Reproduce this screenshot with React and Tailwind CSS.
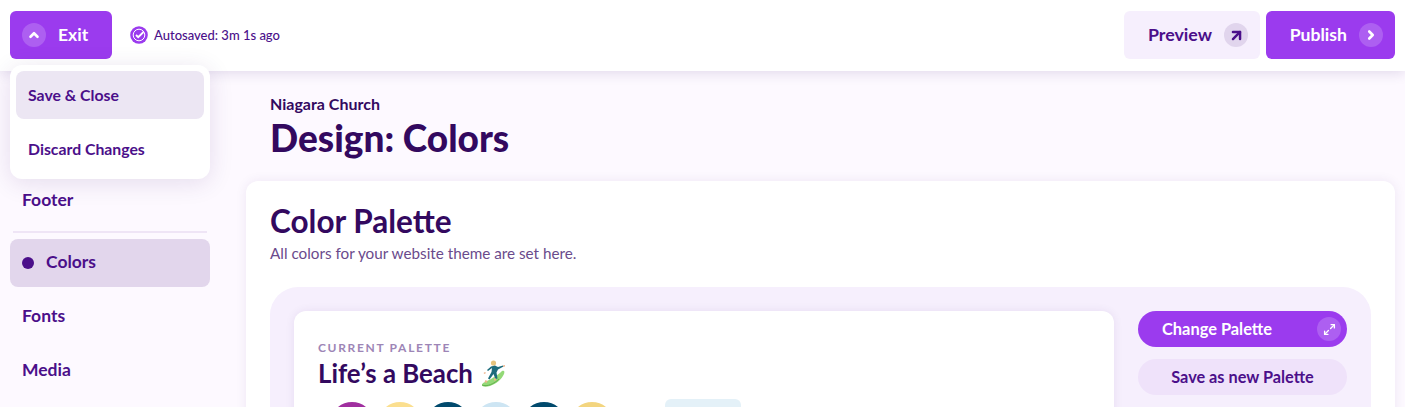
import React from "react";
import { ChevronUp, ChevronRight, ArrowUpRight, Maximize2 } from "lucide-react";

const swatches = ["#a02f9f", "#fbdf8f", "#014a6d", "#cde5f3", "#014a6d", "#f3d57f"];

function Surfer() {
  return (
    <svg width="25" height="27" viewBox="0 0 25 27" className="shrink-0">
      <path d="M1 25c0-2 3-3 7-5s10-6 13-9c2-1 3 0 2 3-2 5-8 10-14 12-4 1-8 1-8-1z" fill="#93d977" />
      <path d="M1 25c5 2 12-1 17-6" stroke="#62b04e" strokeWidth="1" fill="none" />
      <circle cx="12.5" cy="3" r="2.6" fill="#e6c47e" />
      <path d="M10 6.5l4-1 3 1.5 5-1.5 .5 1-5.5 3-1.5 3 1 6-2 .5-2-5-4 5.5-1.5-1 3.5-6.5 .5-4-4 3-1-1z" fill="#1d6c7c" />
      <path d="M4.5 20l2 1-1 2-2-1zM13 18.5l2 0 0 2-2 0zM22 5.5l2-.5 0 1.5-2 .5zM4 12l1 1-1.5 1-1-1z" fill="#eeb48c" />
    </svg>
  );
}

function NavItem({ children }) {
  return (
    <div className="h-12 flex items-center px-3 text-[17.5px] font-bold text-[#4b0f8a]">
      {children}
    </div>
  );
}

function IconDot({ children, className }) {
  return (
    <span className={`w-6 h-6 rounded-full flex items-center justify-center ${className}`}>
      {children}
    </span>
  );
}

export default function App() {
  return (
    <div className="relative h-[407px] overflow-hidden bg-[#fdf9ff] font-['Lato',sans-serif] text-[#33095f]">
      {/* Header */}
      <header className="relative z-10 h-[71px] bg-white flex items-center justify-between px-2.5 pb-px shadow-[0_2px_12px_rgba(60,20,110,0.14)]">
        <div className="flex items-center">
          <button className="w-[102px] h-12 rounded-md bg-[#9b3bee] text-white flex items-center pl-3 gap-[12px] text-[17.5px] font-bold">
            <IconDot className="bg-[#ad5ff1]">
              <ChevronUp size={14} strokeWidth={4.5} />
            </IconDot>
            Exit
          </button>
          <svg width="18" height="18" viewBox="0 0 18 18" className="ml-[18px] mr-[6px]">
            <circle cx="9" cy="9" r="8.8" fill="#9b3bee" />
            <circle cx="9" cy="9" r="5.8" fill="none" stroke="white" strokeWidth="1" />
            <path d="M6 9l2.2 2.2L13.5 6" fill="none" stroke="white" strokeWidth="1.8" />
          </svg>
          <span className="pt-px text-[13px] font-medium text-[#4b0f8a]">Autosaved: 3m 1s ago</span>
        </div>
        <div className="flex items-center gap-1.5">
          <button className="w-[136px] h-12 rounded-md bg-[#f6effd] text-[#4b0f8a] flex items-center justify-end pr-[12px] gap-[12px] text-[17.8px] font-bold">
            <span className="-mt-0.5">Preview</span>
            <IconDot className="bg-[#e1d5ed]">
              <ArrowUpRight size={17} strokeWidth={3.5} />
            </IconDot>
          </button>
          <button className="w-[129px] h-12 rounded-md bg-[#9b3bee] text-white flex items-center justify-end pr-[12px] gap-[12px] text-[17.6px] font-bold">
            Publish
            <IconDot className="bg-[#ad5ff1]">
              <ChevronRight size={14} strokeWidth={4.5} />
            </IconDot>
          </button>
        </div>
      </header>

      {/* Exit menu */}
      <div className="absolute z-20 left-2.5 top-[65px] w-[200px] h-[114px] bg-white rounded-xl p-1.5 shadow-[0_4px_24px_rgba(60,20,110,0.12)] text-[15.8px] font-bold text-[#4b0f8a]">
        <div className="h-12 rounded-lg bg-[#ece6f3] flex items-center px-3">Save &amp; Close</div>
        <div className="h-12 mt-1.5 flex items-center px-3">Discard Changes</div>
      </div>

      <div className="flex">
        {/* Sidebar */}
        <aside className="w-[246px] shrink-0 pl-2.5 pr-9 pt-[105px]">
          <NavItem>Footer</NavItem>
          <div className="h-0.5 mx-[3px] mt-[7px] mb-1.5 bg-[#efe5f6]" />
          <div className="h-12 rounded-lg bg-[#e2d6ec] flex items-center px-3 gap-[12px] text-[17.5px] font-bold text-[#4b0f8a]">
            <span className="w-3 h-3 rounded-full bg-[#4b0f8a]" />
            <span className="-mt-0.5">Colors</span>
          </div>
          <div className="mt-[5px] flex flex-col gap-1.5">
            <NavItem>Fonts</NavItem>
            <NavItem>Media</NavItem>
          </div>
        </aside>

        {/* Main */}
        <main className="flex-1 pr-2.5 pt-6">
          <div className="pl-6 text-[16px] font-bold leading-[18px]">Niagara Church</div>
          <h1 className="pl-6 mt-[3px] text-[37px] font-black leading-[44px]">Design: Colors</h1>
          <section className="mt-[21px] bg-white rounded-xl p-6 shadow-[0_0_12px_rgba(60,20,110,0.08)]">
            <h2 className="text-[31.5px] font-bold leading-[34px] -mt-px mb-[-1px]">Color Palette</h2>
            <p className="mt-1.5 text-[15.25px] leading-5 text-[#6a4a8c]">All colors for your website theme are set here.</p>
            <div className="mt-6 rounded-[28px] bg-[#f6effd] p-6 flex gap-6">
              <div className="flex-1 bg-white rounded-xl px-6 pt-[30px] h-[240px] shadow-[0_0_10px_rgba(60,20,110,0.08)]">
                <div className="text-[12px] font-bold tracking-[0.14em] leading-[14px] text-[#9d85b6]">CURRENT PALETTE</div>
                <div className="mt-[3px] flex items-center gap-[8px] text-[25.8px] font-bold leading-[30px]">
                  Life’s a Beach
                  <Surfer />
                </div>
                <div className="mt-[11px] ml-[9px] flex items-start">
                  {swatches.map((c, i) => (
                    <span
                      key={i}
                      className="w-[50px] h-[50px] -mr-0.5 rounded-full border-[3px] border-white"
                      style={{ backgroundColor: c }}
                    />
                  ))}
                  <span className="ml-[50px] w-[76px] h-12 rounded-md bg-[#e4f1f8]" />
                </div>
              </div>
              <div className="w-[209px] shrink-0 flex flex-col gap-3">
                <button className="relative h-9 rounded-full bg-[#9b3bee] text-white flex items-center pl-6 text-[16.4px] font-bold">
                  <span className="pt-px">Change Palette</span>
                  <IconDot className="absolute right-[6px] top-[6px] bg-[#ad5ff1]">
                    <Maximize2 size={13} strokeWidth={2.5} />
                  </IconDot>
                </button>
                <button className="h-9 rounded-full bg-[#efe2fa] text-[#4b0f8a] text-[16.3px] font-bold">
                  Save as new Palette
                </button>
              </div>
            </div>
          </section>
        </main>
      </div>
    </div>
  );
}
